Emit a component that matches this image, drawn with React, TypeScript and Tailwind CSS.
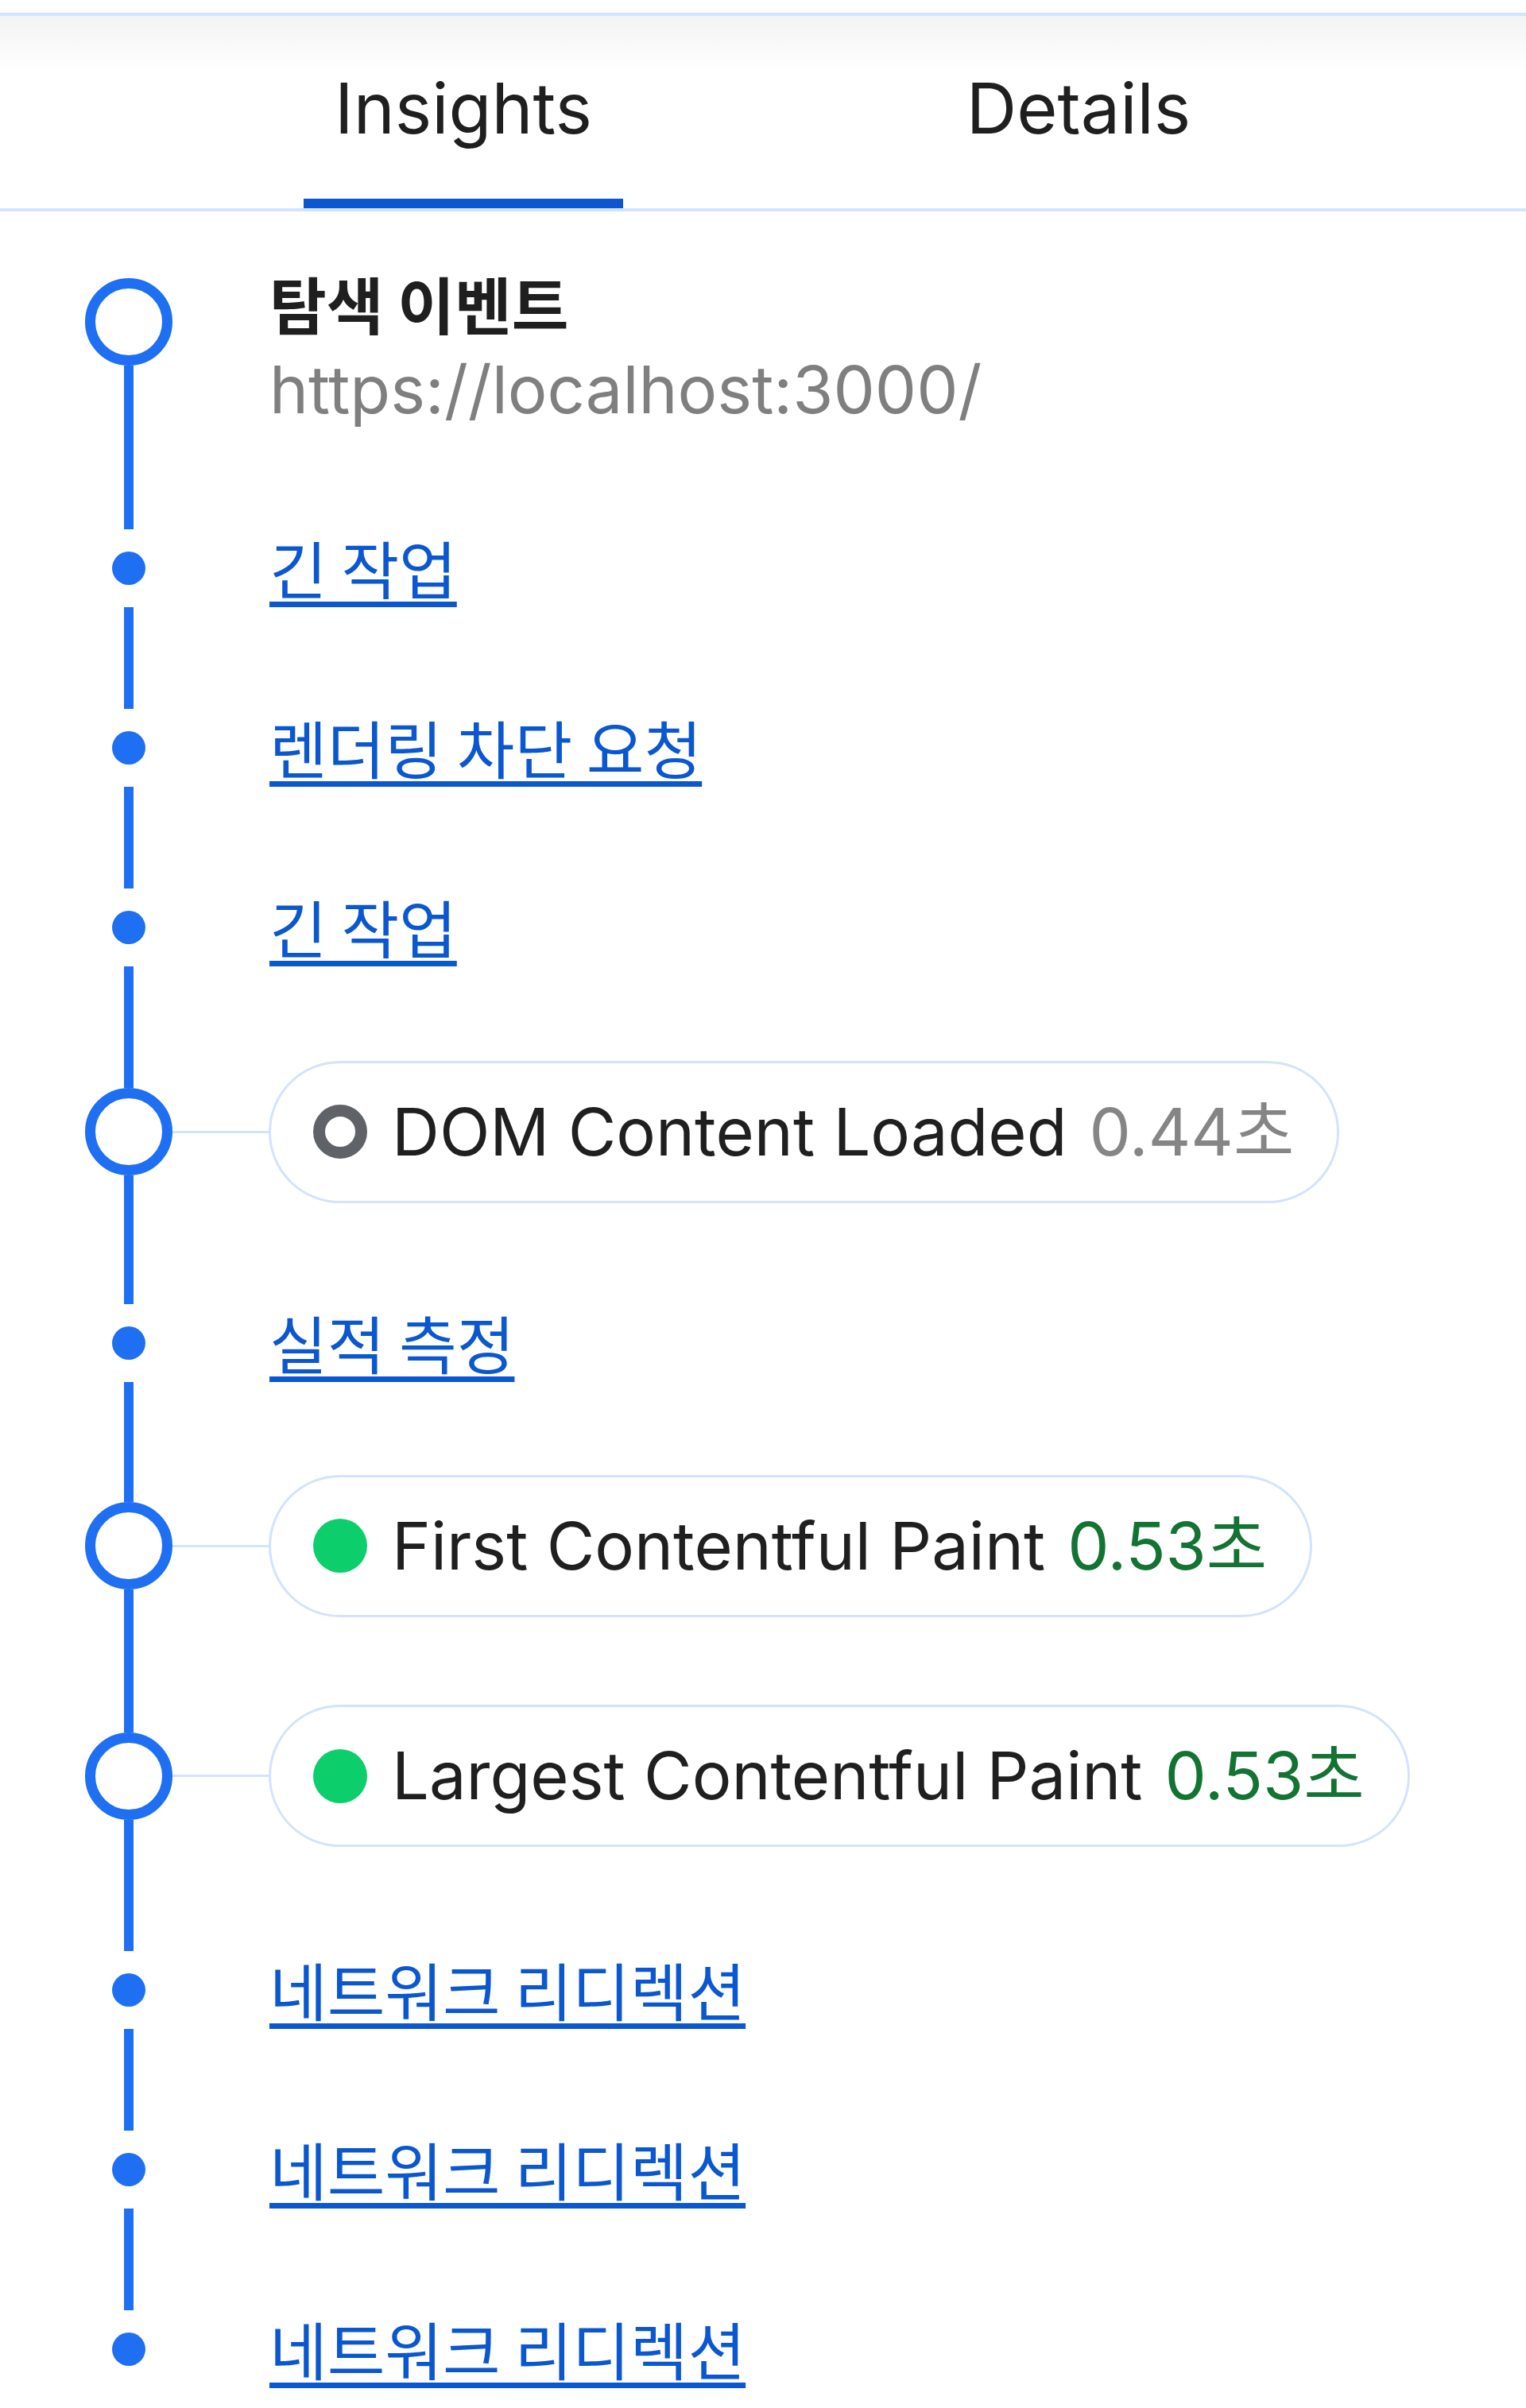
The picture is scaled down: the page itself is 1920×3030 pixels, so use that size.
import React from "react";

const latin = "font-['Inter','Noto_Sans_CJK_KR',sans-serif]";
const kr = "font-['Noto_Sans_CJK_KR',sans-serif]";

function Seg({ show, className }: { show: boolean; className?: string }) {
  return <div className={`w-[12px] ${show ? "bg-[#1f6ff2]" : "bg-transparent"} ${className ?? ""}`} />;
}

function Dot() {
  return <div className="w-[42px] h-[42px] rounded-full bg-[#1f6ff2] shrink-0" />;
}

function Ring() {
  return <div className="w-[110px] h-[110px] rounded-full border-[13px] border-[#1f6ff2] bg-white shrink-0" />;
}

function LinkRow({ text, h, last }: { text: string; h: string; last?: boolean }) {
  return (
    <div className={`flex ${h}`}>
      <div className="w-[110px] flex flex-col items-center">
        <Seg show className="flex-1 mb-[28px]" />
        <Dot />
        <Seg show={!last} className="flex-1 mt-[28px]" />
      </div>
      <div className="flex items-center pl-[122px] pb-[4px]">
        <a
          href="#"
          className={`${kr} text-[79px] leading-none text-[#0b57d0] underline decoration-[7px] underline-offset-[9px]`}
        >
          {text}
        </a>
      </div>
    </div>
  );
}

function PillRow({
  h,
  label,
  value,
  good,
}: {
  h: string;
  label: string;
  value: string;
  good: boolean;
}) {
  return (
    <div className={`flex ${h}`}>
      <div className="w-[110px] flex flex-col items-center">
        <Seg show className="flex-1" />
        <Ring />
        <Seg show className="flex-1" />
      </div>
      <div className="flex items-center">
        <div className="w-[121px] h-[3px] bg-[#d3e3fd]" />
        <div className="h-[179px] rounded-full border-[3px] border-[#d3e3fd] flex items-center pl-[53px] pr-[54px]">
          {good ? (
            <div className="w-[68px] h-[68px] rounded-full bg-[#0cce6b] shrink-0" />
          ) : (
            <div className="w-[68px] h-[68px] rounded-full border-[15px] border-[#5f6368] shrink-0" />
          )}
          <span className={`${latin} text-[83px] leading-none text-[#1f1f1f] ml-[31px] whitespace-nowrap`}>{label}</span>
          <span
            className={`${latin} text-[83px] leading-none ml-[28px] whitespace-nowrap ${
              good ? "text-[#137333]" : "text-[#858585]"
            }`}
          >
            {value}
          </span>
        </div>
      </div>
    </div>
  );
}

export default function App() {
  return (
    <div className="w-[1920px] h-[3030px] overflow-hidden bg-white">
      {/* Tabs header */}
      <div className="pt-[16px]">
        <div className="h-[250px] border-t-4 border-b-4 border-[#d3e3fd] bg-[linear-gradient(to_bottom,#f3f3f3_0px,#ffffff_70px)] flex pl-[382px]">
          <div className="w-[402px] h-full border-b-[12px] border-[#0b57d0] flex justify-center pt-[72px]">
            <span className={`${latin} text-[88px] leading-none text-[#1f1f1f]`}>Insights</span>
          </div>
          <div className="w-[402px] h-full ml-[372px] flex justify-center pt-[72px]">
            <span className={`${latin} text-[88px] leading-none text-[#1f1f1f]`}>Details</span>
          </div>
        </div>
      </div>

      {/* Timeline */}
      <div className="pl-[107px]">
        {/* Navigation event */}
        <div className="flex h-[336px]">
          <div className="w-[110px] flex flex-col items-center">
            <div className="h-[84px]" />
            <Ring />
            <Seg show className="flex-1" />
          </div>
          <div className="pl-[122px] pt-[76px] flex flex-col">
            <span className={`${kr} text-[78px] leading-none font-bold text-[#1f1f1f]`}>탐색 이벤트</span>
            <span className={`${latin} text-[83px] leading-none text-[#7f7f7f] mt-[29px]`}>https://localhost:3000/</span>
          </div>
        </div>

        <LinkRow text="긴 작업" h="h-[226px]" />
        <LinkRow text="렌더링 차단 요청" h="h-[226px]" />
        <LinkRow text="긴 작업" h="h-[226px]" />
        <PillRow h="h-[288px]" label="DOM Content Loaded" value="0.44초" good={false} />
        <LinkRow text="실적 측정" h="h-[244px]" />
        <PillRow h="h-[266px]" label="First Contentful Paint" value="0.53초" good />
        <PillRow h="h-[313px]" label="Largest Contentful Paint" value="0.53초" good />
        <LinkRow text="네트워크 리디렉션" h="h-[226px]" />
        <LinkRow text="네트워크 리디렉션" h="h-[226px]" />
        <LinkRow text="네트워크 리디렉션" h="h-[226px]" last />
      </div>
    </div>
  );
}
